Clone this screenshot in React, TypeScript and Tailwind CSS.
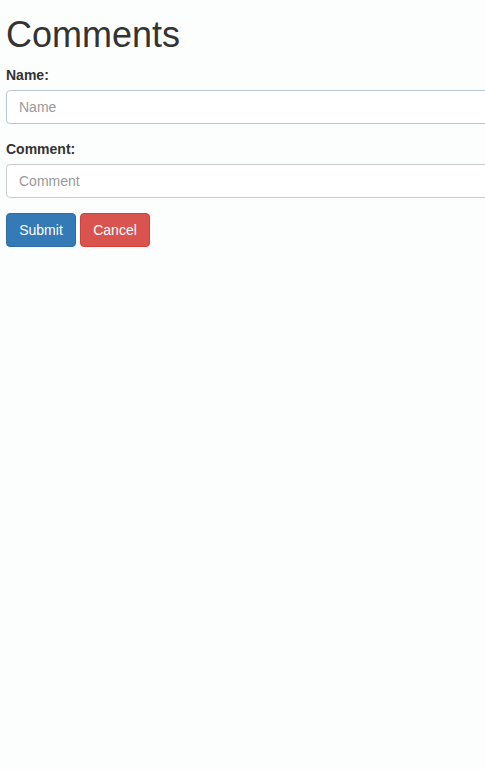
import React from 'react'

const App = () => {
  return (
    <main className="min-h-[769px] w-full overflow-clip bg-[#fcfefd] px-[6px] pt-[15px] font-['Liberation_Sans',Arial,sans-serif] text-[14px] leading-[20px] text-[#333]">
      <h1 className="mb-[10px] text-[36px] leading-[1.1] font-normal">Comments</h1>
      <form>
        <div className="mb-[15px]">
          <label className="mb-[5px] block font-bold">Name:</label>
          <input
            type="text"
            placeholder="Name"
            autoFocus
            className="block h-[34px] w-[500px] rounded-[4px] border border-[#b9c6d8] bg-white px-[12px] py-[6px] text-[14px] text-[#555] caret-[#333] placeholder:text-[#999] outline-none"
          />
        </div>
        <div className="mb-[15px]">
          <label className="mb-[5px] block font-bold">Comment:</label>
          <input
            type="text"
            placeholder="Comment"
            className="block h-[34px] w-[500px] rounded-[4px] border border-[#ccc] bg-white px-[12px] py-[6px] text-[14px] text-[#555] placeholder:text-[#999] outline-none"
          />
        </div>
        <div className="flex gap-[4px]">
          <button type="submit" className="h-[34px] w-[70px] rounded-[4px] border border-[#2e6da4] bg-[#337ab7] text-[14px] text-white">
            Submit
          </button>
          <button type="button" className="h-[34px] w-[70px] rounded-[4px] border border-[#d43f3a] bg-[#d9534f] text-[14px] text-white">
            Cancel
          </button>
        </div>
      </form>
    </main>
  )
}

export default App
